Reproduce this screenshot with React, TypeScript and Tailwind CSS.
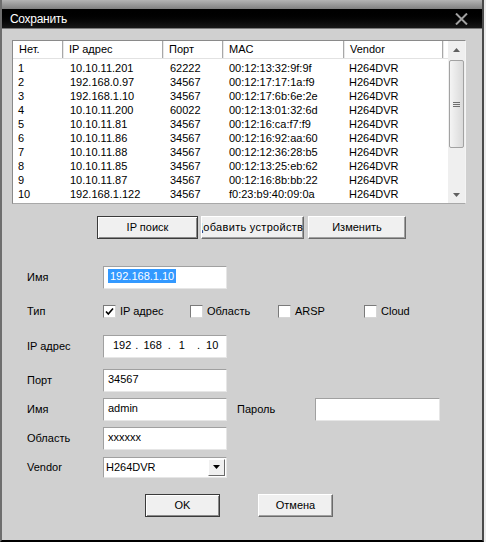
const ROWS = [
  ["1", "10.10.11.201", "62222", "00:12:13:32:9f:9f"],
  ["2", "192.168.0.97", "34567", "00:12:17:17:1a:f9"],
  ["3", "192.168.1.10", "34567", "00:12:17:6b:6e:2e"],
  ["4", "10.10.11.200", "60022", "00:12:13:01:32:6d"],
  ["5", "10.10.11.81", "34567", "00:12:16:ca:f7:f9"],
  ["6", "10.10.11.86", "34567", "00:12:16:92:aa:60"],
  ["7", "10.10.11.88", "34567", "00:12:12:36:28:b5"],
  ["8", "10.10.11.85", "34567", "00:12:13:25:eb:62"],
  ["9", "10.10.11.87", "34567", "00:12:16:8b:bb:22"],
  ["10", "192.168.1.122", "34567", "f0:23:b9:40:09:0a"],
];

const HEADERS = ["Нет.", "IP адрес", "Порт", "MAC", "Vendor"];
const WIDTHS = ["w-[50px]", "w-[100px]", "w-[60px]", "w-[121px]", "w-[99px]"];

const btn =
  "flex items-center justify-center h-[23px] bg-[#f0f0f0] border border-t-white border-l-white border-r-[#6a6a6a] border-b-[#6a6a6a] shadow-[inset_-1px_-1px_0_#a0a0a0] overflow-hidden whitespace-nowrap";
const btnDefault =
  "flex items-center justify-center h-[23px] bg-[#f0f0f0] border border-[#3a3a3a] shadow-[inset_1px_1px_0_#ffffff,inset_-1px_-1px_0_#8a8a8a] overflow-hidden whitespace-nowrap";
const field =
  "h-[23px] w-[124px] bg-white border border-t-[#a0a0a0] border-l-[#a0a0a0] border-b-[#e6e6e6] border-r-[#e6e6e6] flex items-center pl-[4px] pb-[2px]";

function Check({ checked }: { checked?: boolean }) {
  return (
    <span className="w-[13px] h-[13px] bg-white border border-t-[#7a7a7a] border-l-[#7a7a7a] border-b-[#d6d6d6] border-r-[#d6d6d6] flex items-center justify-center">
      {checked && (
        <svg width="9" height="9" viewBox="0 0 9 9">
          <path d="M1 4.5 L3.3 7 L8 1.5" fill="none" stroke="#000" strokeWidth="1.6" />
        </svg>
      )}
    </span>
  );
}

function Label({ children }: { children: React.ReactNode }) {
  return <div className="w-[76px] shrink-0">{children}</div>;
}

export default function App() {
  return (
    <div className="w-[486px] h-[542px] flex bg-[#ececec] font-['Liberation_Sans',Arial,sans-serif] text-[11px] text-black overflow-hidden">
      <div className="w-[484px] h-[542px] flex flex-col border-l-2 border-l-[#6e6e6e] border-r-2 border-r-[#4a4a4a] border-b-2 border-b-black">
        <div className="h-[9px] bg-gradient-to-b from-[#b4b4b4] to-[#808080]" />
        <div className="h-[19px] bg-gradient-to-b from-black to-[#171717] flex items-center pl-[8px] pr-[14px]">
          <span className="text-white text-[12px] tracking-[-0.3px] flex-1">Сохранить</span>
          <svg width="13" height="12" viewBox="0 0 13 12">
            <path d="M1 0.5 L12 11.5 M12 0.5 L1 11.5" stroke="#a0a0a0" strokeWidth="2" />
          </svg>
        </div>
        <div className="h-px bg-[#7a7a7a]" />
        <div className="flex-1 bg-[#d0d0d0] flex flex-col">
          {/* device list */}
          <div className="ml-[10px] mt-[11px] w-[454px] h-[164px] bg-white border border-t-[#8a8a8a] border-l-[#8a8a8a] border-b-[#a8a8a8] border-r-[#f4f4f4] flex">
            <div className="flex-1 flex flex-col">
              <div className="h-[18px] flex border-b border-[#e2e2e2]">
                {HEADERS.map((h, i) => (
                  <div
                    key={h}
                    className={`${WIDTHS[i]} pl-[6px] flex items-center border-r border-r-[#a8a8a8] shadow-[1px_0_0_#e8e8e8]`}
                  >
                    {h}
                  </div>
                ))}
              </div>
              <div className="pt-[2px]">
                {ROWS.map((r) => (
                  <div key={r[0]} className="h-[14px] flex items-center leading-[14px]">
                    <div className={`${WIDTHS[0]} pl-[5px]`}>{r[0]}</div>
                    <div className={`${WIDTHS[1]} pl-[7px]`}>{r[1]}</div>
                    <div className={`${WIDTHS[2]} pl-[7px]`}>{r[2]}</div>
                    <div className={`${WIDTHS[3]} pl-[6px]`}>{r[3]}</div>
                    <div className={`${WIDTHS[4]} pl-[5px]`}>H264DVR</div>
                  </div>
                ))}
              </div>
            </div>
            {/* scrollbar */}
            <div className="w-[17px] bg-[#efefef] flex flex-col items-center">
              <div className="h-[17px] flex items-center justify-center">
                <svg width="7" height="4" viewBox="0 0 7 4">
                  <path d="M0 4 L3.5 0 L7 4 Z" fill="#606060" />
                </svg>
              </div>
              <div className="mt-[2px] w-[15px] h-[88px] rounded-[2px] border border-[#a2a2a2] bg-gradient-to-r from-[#f4f4f4] to-[#dadada] flex flex-col items-center justify-center gap-[1px]">
                <div className="w-[7px] h-px bg-[#6e6e6e]" />
                <div className="w-[7px] h-px bg-[#6e6e6e]" />
                <div className="w-[7px] h-px bg-[#6e6e6e]" />
              </div>
              <div className="flex-1" />
              <div className="h-[17px] flex items-center justify-center">
                <svg width="7" height="4" viewBox="0 0 7 4">
                  <path d="M0 0 L3.5 4 L7 0 Z" fill="#606060" />
                </svg>
              </div>
            </div>
          </div>

          {/* action buttons */}
          <div className="mt-[12px] ml-[95px] flex">
            <div className={`${btnDefault} w-[101px]`}>IP поиск</div>
            <div className={`${btn} w-[103px] ml-[3px] tracking-[0.3px]`}>Добавить устройство</div>
            <div className={`${btn} w-[98px] ml-[4px]`}>Изменить</div>
          </div>

          {/* form */}
          <div className="pl-[25px] flex flex-col">
            <div className="mt-[27px] h-[22px] flex items-center">
              <Label>Имя</Label>
              <div className={`${field} h-[22px]`}>
                <span className="bg-[#3399ff] text-white px-[2px] leading-[14px]">192.168.1.10</span>
              </div>
            </div>

            <div className="mt-[16px] h-[14px] flex items-center">
              <Label>Тип</Label>
              <div className="w-[87px] flex items-center gap-[4px]">
                <Check checked />
                <span>IP адрес</span>
              </div>
              <div className="w-[88px] flex items-center gap-[4px]">
                <Check />
                <span>Область</span>
              </div>
              <div className="w-[86px] flex items-center gap-[4px]">
                <Check />
                <span>ARSP</span>
              </div>
              <div className="flex items-center gap-[4px]">
                <Check />
                <span>Cloud</span>
              </div>
            </div>

            <div className="mt-[17px] h-[23px] flex items-center">
              <Label>IP адрес</Label>
              <div className={`${field} pl-[9px]`}>
                <span>192</span>
                <span className="ml-[4px]">.</span>
                <span className="ml-[5px]">168</span>
                <span className="ml-[6px]">.</span>
                <span className="ml-[8px]">1</span>
                <span className="ml-[12px]">.</span>
                <span className="ml-[6px]">10</span>
              </div>
            </div>

            <div className="mt-[11px] h-[23px] flex items-center">
              <Label>Порт</Label>
              <div className={field}>34567</div>
            </div>

            <div className="mt-[6px] h-[23px] flex items-center">
              <Label>Имя</Label>
              <div className={field}>admin</div>
              <div className="ml-[10px] w-[78px]">Пароль</div>
              <div className={`${field} w-[125px]`} />
            </div>

            <div className="mt-[6px] h-[22px] flex items-center">
              <Label>Область</Label>
              <div className={`${field} h-[22px] bg-[#f0f0f0]`}>xxxxxx</div>
            </div>

            <div className="mt-[8px] h-[20px] flex items-center">
              <Label>Vendor</Label>
              <div className="h-[21px] w-[124px] bg-white border border-t-[#a0a0a0] border-l-[#a0a0a0] border-b-[#e6e6e6] border-r-[#e6e6e6] flex items-center pl-[2px] pr-[1px]">
                <span className="flex-1">H264DVR</span>
                <div className="w-[17px] h-[17px] bg-[#f0f0f0] border border-t-white border-l-white border-r-[#6a6a6a] border-b-[#6a6a6a] flex items-center justify-center">
                  <svg width="7" height="4" viewBox="0 0 7 4">
                    <path d="M0 0 L3.5 4 L7 0 Z" fill="#000" />
                  </svg>
                </div>
              </div>
            </div>

            <div className="mt-[17px] ml-[118px] flex">
              <div className={`${btnDefault} w-[75px]`}>OK</div>
              <div className={`${btn} w-[75px] ml-[38px]`}>Отмена</div>
            </div>
          </div>
        </div>
      </div>
    </div>
  );
}
